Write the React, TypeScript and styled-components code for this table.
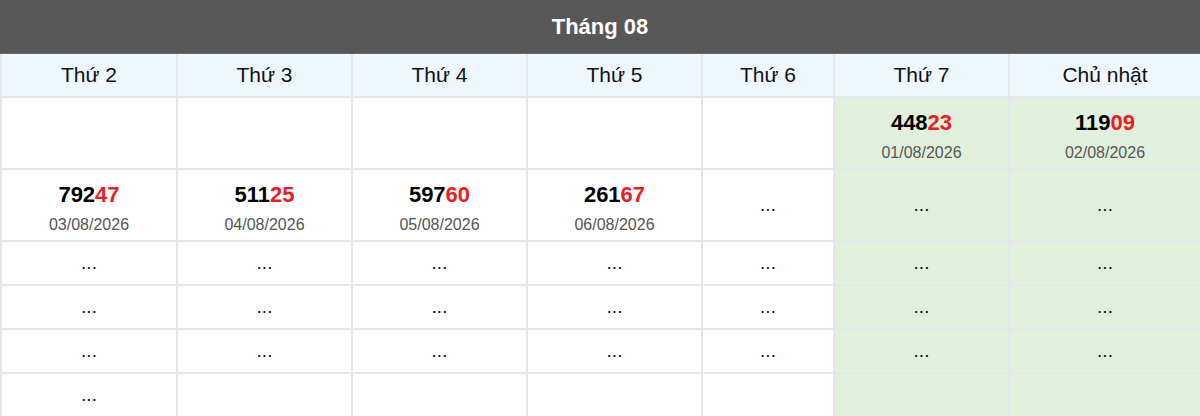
import React from 'react'
import styled, { createGlobalStyle } from 'styled-components'

const Global = createGlobalStyle`
  html, body { margin: 0; padding: 0; background: #fff; }
  body { font-family: 'Liberation Sans', Arial, sans-serif; }
`

const COLS = [176, 175, 175, 175, 132, 175, 192]
const DAYS = ['Thứ 2', 'Thứ 3', 'Thứ 4', 'Thứ 5', 'Thứ 6', 'Thứ 7', 'Chủ nhật']

type Cell = { num: string; date: string } | 'dots' | null

const ROWS: Cell[][] = [
  [null, null, null, null, null, { num: '44823', date: '01/08/2026' }, { num: '11909', date: '02/08/2026' }],
  [
    { num: '79247', date: '03/08/2026' },
    { num: '51125', date: '04/08/2026' },
    { num: '59760', date: '05/08/2026' },
    { num: '26167', date: '06/08/2026' },
    'dots', 'dots', 'dots',
  ],
  ['dots', 'dots', 'dots', 'dots', 'dots', 'dots', 'dots'],
  ['dots', 'dots', 'dots', 'dots', 'dots', 'dots', 'dots'],
  ['dots', 'dots', 'dots', 'dots', 'dots', 'dots', 'dots'],
  ['dots', null, null, null, null, null, null],
]

const Wrap = styled.div`
  width: 1200px;
`

const Title = styled.div`
  height: 53px;
  background: #575757;
  color: #fff;
  font-size: 22px;
  font-weight: 700;
  display: flex;
  align-items: center;
  justify-content: center;
  border-bottom: 1px solid #6a6a6a;
`

const Table = styled.table`
  width: 1200px;
  border-collapse: collapse;
  table-layout: fixed;
`

const Head = styled.th`
  height: 42px;
  padding: 0;
  background: #eef6fe;
  border: 2px solid #e4e6ea;
  border-top: none;
  font-size: 21px;
  font-weight: 400;
  color: #111;
  text-align: center;
`

const Td = styled.td<{ $weekend: boolean; $tall: boolean }>`
  height: ${p => (p.$tall ? 70 : 42)}px;
  padding: 0;
  background: ${p => (p.$weekend ? '#e1f0dc' : '#fff')};
  border: 2px solid #e4e6ea;
  text-align: center;
  vertical-align: middle;
`

const Result = styled.div`
  padding-top: 6px;
`

const Num = styled.div`
  font-size: 22px;
  font-weight: 700;
  color: #000;
  line-height: 26px;
`

const Tail = styled.span`
  color: #ee1c25;
`

const DateText = styled.div`
  margin-top: 8px;
  font-size: 16px;
  color: #555;
  line-height: 18px;
`

const Dots = styled.span`
  font-size: 19px;
  color: #111;
`

export default function App() {
  return (
    <Wrap>
      <Global />
      <Title>Tháng 08</Title>
      <Table>
        <colgroup>
          {COLS.map((w, i) => <col key={i} style={{ width: w }} />)}
        </colgroup>
        <thead>
          <tr>
            {DAYS.map(d => <Head key={d}>{d}</Head>)}
          </tr>
        </thead>
        <tbody>
          {ROWS.map((row, ri) => (
            <tr key={ri}>
              {row.map((c, ci) => (
                <Td key={ci} $weekend={ci >= 5} $tall={ri < 2}>
                  {c === 'dots' ? (
                    <Dots>...</Dots>
                  ) : c ? (
                    <Result>
                      <Num>
                        {c.num.slice(0, 3)}
                        <Tail>{c.num.slice(3)}</Tail>
                      </Num>
                      <DateText>{c.date}</DateText>
                    </Result>
                  ) : null}
                </Td>
              ))}
            </tr>
          ))}
        </tbody>
      </Table>
    </Wrap>
  )
}
